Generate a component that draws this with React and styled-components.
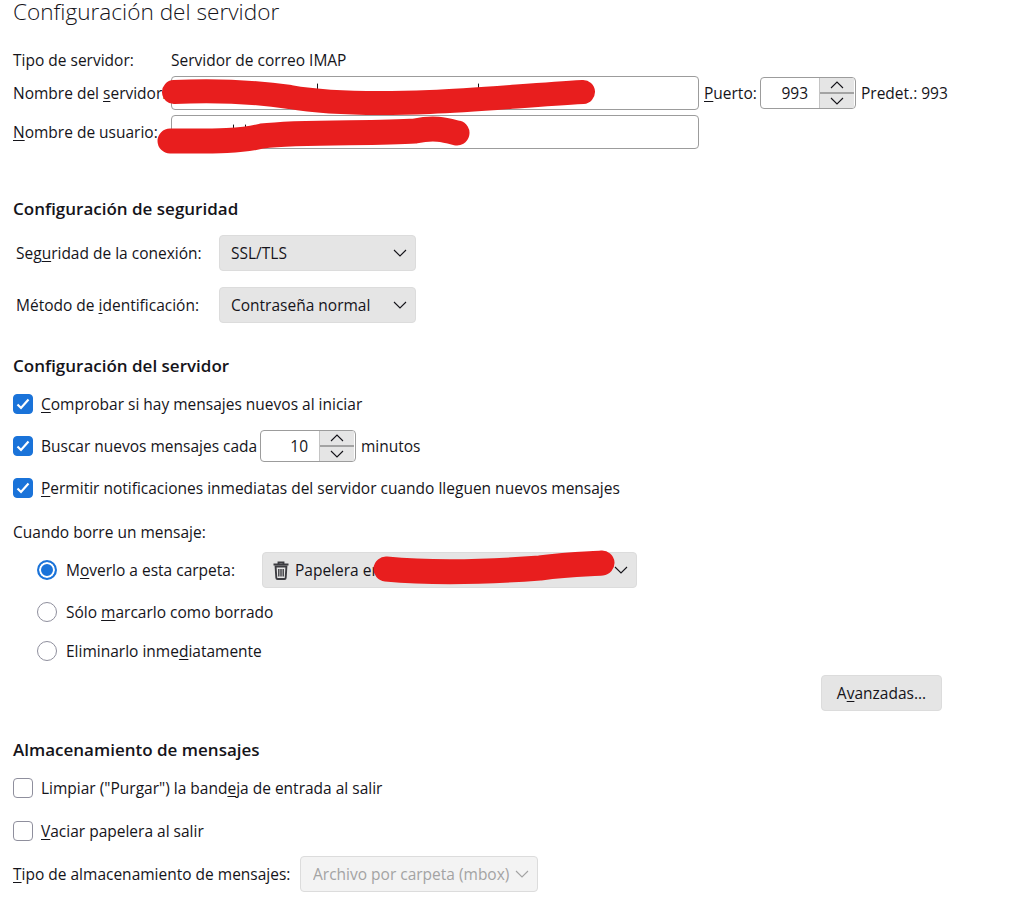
import styled, { createGlobalStyle } from "styled-components";

const inkColor = "#15141a";
const borderColor = "#9c9c9c";

const GlobalStyle = createGlobalStyle`
  html, body {
    margin: 0;
    padding: 0;
    background: #fff;
  }
  body {
    font-family: "Open Sans", "Noto Sans", sans-serif;
    font-size: 15.5px;
    color: ${inkColor};
  }
`;

const Page = styled.div`
  position: relative;
  width: 1026px;
  height: 897px;
  padding-left: 13px;
  box-sizing: border-box;
  overflow: hidden;
`;

const Title = styled.h1`
  margin: 0;
  height: 24px;
  line-height: 24px;
  font-size: 22.6px;
  font-weight: 300;
`;

const SectionTitle = styled.h2`
  margin: ${(props) => props.$top}px 0 0;
  height: 20px;
  line-height: 20px;
  font-size: 17px;
  font-weight: 600;
`;

const Row = styled.div`
  display: flex;
  align-items: center;
  height: ${(props) => props.$height || 34}px;
  margin-top: ${(props) => props.$top || 0}px;
  margin-left: ${(props) => props.$indent || 0}px;
  white-space: nowrap;
`;

const FieldLabel = styled.label`
  flex: none;
  width: ${(props) => props.$width}px;
`;

const Key = styled.span`
  text-decoration: underline;
  text-underline-offset: 2px;
`;

const TextField = styled.input`
  flex: none;
  width: 528px;
  height: 34px;
  box-sizing: border-box;
  padding: 0 8px;
  border: 1px solid ${borderColor};
  border-radius: 4px;
  background: #fff;
`;

const PortLabel = styled.label`
  flex: none;
  width: 56px;
  margin-left: 5px;
`;

const Spin = styled.div`
  flex: none;
  display: flex;
  width: 96px;
  height: 32px;
  box-sizing: border-box;
  border: 1px solid ${borderColor};
  border-radius: 4px;
  margin-right: 5px;
  overflow: hidden;
`;

const SpinValue = styled.div`
  flex: 1;
  line-height: 30px;
  text-align: right;
  padding-right: 11px;
`;

const SpinButtons = styled.div`
  flex: none;
  display: flex;
  flex-direction: column;
  width: 34px;
  margin-right: 1px;
  background: #e5e5e5;
  border-left: 1px solid #c4c4c4;
`;

const SpinButton = styled.div`
  flex: 1;
  display: flex;
  align-items: center;
  justify-content: center;
  & + & {
    border-top: 2px solid #a3a3a3;
  }
`;

const Select = styled.div`
  flex: none;
  display: flex;
  align-items: center;
  box-sizing: border-box;
  width: ${(props) => props.$width}px;
  height: 36px;
  padding: 0 8px 0 ${(props) => props.$pad || 11}px;
  border: 1px solid #dcdcdc;
  border-radius: 4px;
  background: ${(props) => (props.$disabled ? "#f3f3f3" : "#e5e5e5")};
  color: ${(props) => (props.$disabled ? "#a3a3a3" : inkColor)};
`;

const SelectText = styled.span`
  flex: 1;
  overflow: hidden;
`;

const CheckBox = styled.span`
  flex: none;
  display: flex;
  align-items: center;
  justify-content: center;
  width: 20px;
  height: 20px;
  box-sizing: border-box;
  margin-right: 8px;
  border-radius: 4px;
  border: 1px solid ${(props) => (props.$checked ? "#1a73d9" : "#8f8f9d")};
  background: ${(props) => (props.$checked ? "#1a73d9" : "#fff")};
`;

const Radio = styled.span`
  flex: none;
  width: 20px;
  height: 20px;
  box-sizing: border-box;
  margin-right: 9px;
  border-radius: 50%;
  border: ${(props) => (props.$checked ? "2px solid #1a73d9" : "1px solid #8f8f9d")};
  background: ${(props) => (props.$checked ? "#1a73d9" : "#fff")};
  box-shadow: ${(props) => (props.$checked ? "inset 0 0 0 2px #fff" : "none")};
`;

const ButtonRow = styled.div`
  display: flex;
  justify-content: flex-end;
  width: 929px;
  margin-top: 7px;
`;

const Button = styled.button`
  width: 121px;
  height: 36px;
  padding: 0;
  border: 1px solid #dcdcdc;
  border-radius: 4px;
  background: #e5e5e5;
  color: ${inkColor};
  font: inherit;
`;

const TrashIcon = styled.svg`
  flex: none;
  margin-right: 6px;
`;

const Scribbles = styled.svg`
  position: absolute;
  left: 0;
  top: 0;
  pointer-events: none;
`;

const Chevron = ({ up, color = inkColor }) => (
  <svg width="14" height="8" viewBox="0 0 14 8" fill="none">
    <path d={up ? "M1 7 7 1l6 6" : "M1 1l6 6 6-6"} stroke={color} strokeWidth="1.1" />
  </svg>
);

const Trash = () => (
  <TrashIcon width="16" height="19" viewBox="0 0 16 19">
    <path d="M.5 3.5h15M5.5 3V1.4h5V3" fill="none" stroke="#3c3c41" strokeWidth="1.9" />
    <path
      d="M2.6 5.5h10.8l-.7 11.2c0 .8-.6 1.3-1.3 1.3H4.6c-.7 0-1.3-.5-1.3-1.3z"
      fill="none"
      stroke="#3c3c41"
      strokeWidth="1.9"
    />
    <path d="M5.8 8v7.5M8 8v7.5M10.2 8v7.5" stroke="#3c3c41" strokeWidth="1.4" />
  </TrashIcon>
);

const Tick = () => (
  <svg width="14" height="12" viewBox="0 0 14 12" fill="none">
    <path d="M1.5 6.5 5 10l7.5-8.5" stroke="#fff" strokeWidth="2.2" />
  </svg>
);

const SpinBox = ({ value }) => (
  <Spin>
    <SpinValue>{value}</SpinValue>
    <SpinButtons>
      <SpinButton>
        <Chevron up />
      </SpinButton>
      <SpinButton>
        <Chevron />
      </SpinButton>
    </SpinButtons>
  </Spin>
);

const App = () => (
  <Page>
    <GlobalStyle />
    <Title>Configuración del servidor</Title>

    <Row $top={24} $height={24}>
      <FieldLabel $width={158}>Tipo de servidor:</FieldLabel>
      <span>Servidor de correo IMAP</span>
    </Row>
    <Row $top={4}>
      <FieldLabel $width={158}>
        Nombre del <Key>s</Key>ervidor:
      </FieldLabel>
      <TextField readOnly />
      <PortLabel>
        <Key>P</Key>uerto:
      </PortLabel>
      <SpinBox value="993" />
      <span>Predet.: 993</span>
    </Row>
    <Row $top={5}>
      <FieldLabel $width={158}>
        <Key>N</Key>ombre de usuario:
      </FieldLabel>
      <TextField readOnly />
    </Row>

    <SectionTitle $top={50}>Configuración de seguridad</SectionTitle>
    <Row $top={16} $height={36} $indent={3}>
      <FieldLabel $width={203}>
        Seg<Key>u</Key>ridad de la conexión:
      </FieldLabel>
      <Select $width={197}>
        <SelectText>SSL/TLS</SelectText>
        <Chevron />
      </Select>
    </Row>
    <Row $top={16} $height={36} $indent={3}>
      <FieldLabel $width={203}>
        Método de <Key>i</Key>dentificación:
      </FieldLabel>
      <Select $width={197}>
        <SelectText>Contraseña normal</SelectText>
        <Chevron />
      </Select>
    </Row>

    <SectionTitle $top={33}>Configuración del servidor</SectionTitle>
    <Row $top={11}>
      <CheckBox $checked>
        <Tick />
      </CheckBox>
      <span>
        <Key>C</Key>omprobar si hay mensajes nuevos al iniciar
      </span>
    </Row>
    <Row $top={8}>
      <CheckBox $checked>
        <Tick />
      </CheckBox>
      <FieldLabel $width={219}>Buscar nuevos mensajes cada</FieldLabel>
      <SpinBox value="10" />
      <span>minutos</span>
    </Row>
    <Row $top={8}>
      <CheckBox $checked>
        <Tick />
      </CheckBox>
      <span>
        <Key>P</Key>ermitir notificaciones inmediatas del servidor cuando lleguen nuevos mensajes
      </span>
    </Row>

    <Row $top={15} $height={24}>
      Cuando borre un mensaje:
    </Row>
    <Row $top={8} $height={36} $indent={24}>
      <Radio $checked />
      <FieldLabel $width={196}>
        M<Key>o</Key>verlo a esta carpeta:
      </FieldLabel>
      <Select $width={375} $pad={10}>
        <Trash />
        <SelectText>Papelera en</SelectText>
        <Chevron />
      </Select>
    </Row>
    <Row $top={7} $height={34} $indent={24}>
      <Radio />
      <span>
        Sólo <Key>m</Key>arcarlo como borrado
      </span>
    </Row>
    <Row $top={5} $height={34} $indent={24}>
      <Radio />
      <span>
        Eliminarlo inme<Key>d</Key>iatamente
      </span>
    </Row>

    <ButtonRow>
      <Button>
        A<Key>v</Key>anzadas...
      </Button>
    </ButtonRow>

    <SectionTitle $top={29}>Almacenamiento de mensajes</SectionTitle>
    <Row $top={11} $height={34}>
      <CheckBox />
      <span>
        Limpiar ("Purgar") la band<Key>e</Key>ja de entrada al salir
      </span>
    </Row>
    <Row $top={9} $height={34}>
      <CheckBox />
      <span>
        <Key>V</Key>aciar papelera al salir
      </span>
    </Row>
    <Row $top={8} $height={36}>
      <FieldLabel $width={287}>
        <Key>T</Key>ipo de almacenamiento de mensajes:
      </FieldLabel>
      <Select $width={238} $pad={12} $disabled>
        <SelectText>Archivo por carpeta (mbox)</SelectText>
        <Chevron color="#a3a3a3" />
      </Select>
    </Row>

    <Scribbles width="1026" height="897" fill="none" strokeLinecap="round">
      <path d="M317.5 84v6M478.5 84v6M233.5 125v5M245.5 125v5" stroke={inkColor} strokeWidth="1" />
      <g stroke="#e81e1e">
        <path d="M174 92C215 90 255 92 290 97C330 104 380 104 430 102C480 100 530 95 583 92" strokeWidth="24" />
        <path d="M170 141C205 141 240 142 262 136C300 131 375 134 415 131C435 127 445 130 457 133" strokeWidth="25" />
        <path d="M386 569C440 574 500 571 540 568C570 564 590 564 602 563" strokeWidth="25" />
      </g>
    </Scribbles>
  </Page>
);

export default App;
